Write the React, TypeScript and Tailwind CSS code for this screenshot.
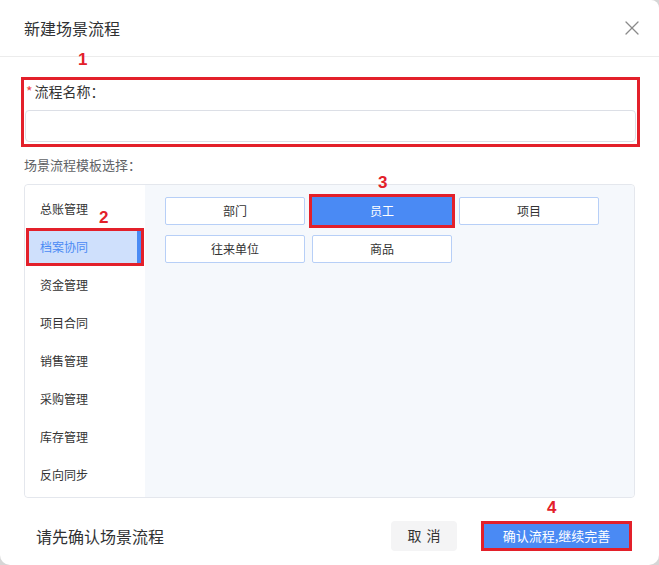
import { X } from "lucide-react";

const menus = ["总账管理", "档案协同", "资金管理", "项目合同", "销售管理", "采购管理", "库存管理", "反向同步"];
const templates = ["部门", "员工", "项目", "往来单位", "商品"];

// red step markers painted over the dialog
function Step({ n, className }: { n: string; className: string }) {
  return (
    <span
      className={`absolute font-['Liberation_Sans',sans-serif] text-[17px] font-bold leading-[20px] text-[#e3202a] ${className}`}
    >
      {n}
    </span>
  );
}

export default function App() {
  return (
    <div className="w-[659px] h-[565px] bg-[#d6d6d6] font-['Noto_Sans_CJK_SC','Noto_Sans',sans-serif]">
      <div className="w-full h-full bg-white rounded-b-[10px] rounded-tr-[8px] flex flex-col">
        {/* header */}
        <div className="h-[57px] shrink-0 flex items-center justify-between pl-6 pr-[15px] border-b border-[#ececec]">
          <span className="text-[16px] text-[#303133]">新建场景流程</span>
          <X size={24} strokeWidth={1.3} className="text-[#8a8a8a]" />
        </div>

        <div className="flex flex-col px-6 pt-[20px]">
          {/* name field */}
          <div className="relative -ml-[3px] -mr-[5px] h-[70px] border-[3px] border-[#e3202a] flex flex-col px-px pt-[2px]">
            <Step n="1" className="left-[54px] -top-[30px]" />
            <div className="h-[18px] flex items-center text-[14px] text-[#333]">
              <span className="text-[#f04040] mr-[2px] ml-[1px]">*</span>
              流程名称：
            </div>
            <input className="mt-[10px] h-[32px] rounded-[4px] border border-[#dcdfe6] bg-white outline-none px-2 text-[13px]" />
          </div>

          <div className="mt-[8px] h-[20px] flex items-center text-[13px] text-[#606266]">场景流程模板选择：</div>

          {/* template picker */}
          <div className="mt-[9px] h-[314px] flex border border-[#e4e7ed] rounded-[4px] overflow-visible">
            <div className="w-[120px] shrink-0 bg-white pt-[5px] flex flex-col rounded-l-[4px]">
              {menus.map((m, i) =>
                i === 1 ? (
                  <div key={m} className="relative h-[38px] mx-[1px] border-[3px] border-[#e3202a] flex">
                    <Step n="2" className="left-[70px] -top-[23px]" />
                    <div className="flex-1 flex items-center pl-[11px] bg-[#cfe0fc] border-r-4 border-[#4a8af4] text-[12px] text-[#4a8af4]">
                      {m}
                    </div>
                  </div>
                ) : (
                  <div key={m} className="h-[38px] flex items-center pl-[15px] text-[12px] text-[#333]">
                    {m}
                  </div>
                )
              )}
            </div>
            <div className="flex-1 bg-[#f5f8fc] pl-[20px] pt-[12px] rounded-r-[4px]">
              <div className="grid grid-cols-[140px_140px_140px] gap-x-[7px] gap-y-[10px]">
                {templates.map((t) =>
                  t === "员工" ? (
                    <div
                      key={t}
                      className="relative h-[28px] flex items-center justify-center bg-[#4a8af4] ring-[3px] ring-[#e3202a] text-[12px] text-white"
                    >
                      <Step n="3" className="left-[66px] -top-[24px]" />
                      {t}
                    </div>
                  ) : (
                    <div
                      key={t}
                      className="h-[28px] flex items-center justify-center bg-white border border-[#b7cff7] rounded-[2px] text-[12px] text-[#333]"
                    >
                      {t}
                    </div>
                  )
                )}
              </div>
            </div>
          </div>
        </div>

        {/* footer */}
        <div className="mt-[22px] flex items-center pl-9 pr-[27px]">
          <span className="flex-1 text-[16px] text-[#303133]">请先确认场景流程</span>
          <button className="w-[66px] h-[30px] rounded-[4px] bg-[#f4f4f5] text-[14px] text-[#333] flex items-center justify-center gap-[5px]">
            <span>取</span>
            <span>消</span>
          </button>
          <div className="relative ml-[24px]">
            <Step n="4" className="left-[66px] -top-[22px]" />
            <button className="w-[151px] h-[30px] mt-[1px] bg-[#4a8af4] ring-[3px] ring-inset ring-[#e3202a] text-[13px] text-white">
              确认流程,继续完善
            </button>
          </div>
        </div>
      </div>
    </div>
  );
}
